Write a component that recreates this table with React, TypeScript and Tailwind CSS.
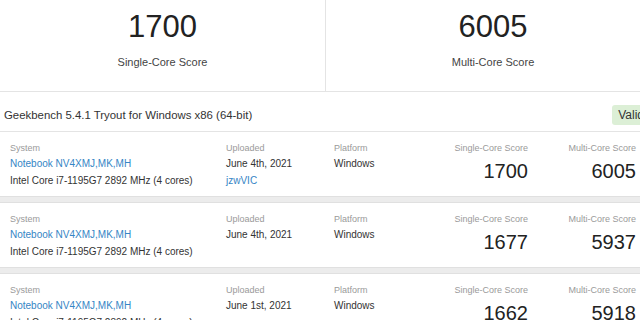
const results = [
  { uploaded: 'June 4th, 2021', user: 'jzwVIC', single: 1700, multi: 6005 },
  { uploaded: 'June 4th, 2021', user: '', single: 1677, multi: 5937 },
  { uploaded: 'June 1st, 2021', user: '', single: 1662, multi: 5918 },
];

// One benchmark result row
function ResultRow({ r }: { r: (typeof results)[number] }) {
  return (
    <div className="flex h-[64px] bg-white pl-[10px]">
      <div className="w-[216px]">
        <div className="mt-[10px] text-[9px] leading-[12px] text-[#9a9a9a]">System</div>
        <div className="text-[10px] leading-[17px] text-[#3585c5] mt-[1px]">Notebook NV4XMJ,MK,MH</div>
        <div className="text-[10px] leading-[17px] text-[#333]">Intel Core i7-1195G7 2892 MHz (4 cores)</div>
      </div>
      <div className="w-[108px]">
        <div className="mt-[10px] text-[9px] leading-[12px] text-[#9a9a9a]">Uploaded</div>
        <div className="text-[10px] leading-[17px] text-[#333] mt-[1px]">{r.uploaded}</div>
        {r.user && <div className="text-[10px] leading-[17px] text-[#3585c5]">{r.user}</div>}
      </div>
      <div className="w-[106px]">
        <div className="mt-[10px] text-[9px] leading-[12px] text-[#9a9a9a]">Platform</div>
        <div className="text-[10px] leading-[17px] text-[#333] mt-[1px]">Windows</div>
      </div>
      <div className="w-[88px] text-right">
        <div className="mt-[10px] text-[9px] leading-[12px] text-[#9a9a9a]">Single-Core Score</div>
        <div className="mt-[7px] text-[20px] leading-none text-[#222]">{r.single}</div>
      </div>
      <div className="w-[108px] text-right">
        <div className="mt-[10px] text-[9px] leading-[12px] text-[#9a9a9a]">Multi-Core Score</div>
        <div className="mt-[7px] text-[20px] leading-none text-[#222]">{r.multi}</div>
      </div>
    </div>
  );
}

export default function App() {
  return (
    <div className="w-[640px] h-[320px] overflow-hidden bg-[#eeeeee] font-['Liberation_Sans',Arial,sans-serif]">
      <div className="w-[660px]">
        {/* Score summary */}
        <div className="flex h-[92px] bg-white border-b border-[#e4e4e4]">
          <div className="w-[326px] border-r border-[#e4e4e4] flex flex-col items-center">
            <div className="mt-[11px] text-[31px] leading-none text-[#222]">1700</div>
            <div className="mt-[13px] text-[11px] leading-[14px] text-[#444]">Single-Core Score</div>
          </div>
          <div className="flex-1 flex flex-col items-center">
            <div className="mt-[11px] text-[31px] leading-none text-[#222]">6005</div>
            <div className="mt-[13px] text-[11px] leading-[14px] text-[#444]">Multi-Core Score</div>
          </div>
        </div>

        {/* Version header */}
        <div className="flex h-[40px] items-center justify-between bg-white border-b border-[#e4e4e4] pl-[4px] pr-[10px] pt-[6px]">
          <div className="text-[11.4px] leading-[16px] text-[#333]">Geekbench 5.4.1 Tryout for Windows x86 (64-bit)</div>
          <div className="h-[20px] px-[6px] rounded-[3px] bg-[#dcefd6] text-[12px] leading-[20px] text-[#333]">Valid</div>
        </div>

        {/* Result list */}
        {results.map((r, i) => (
          <div key={i}>
            {i > 0 && <div className="h-[7px] bg-[#ececec] border-y border-[#e0e0e0]" />}
            <ResultRow r={r} />
          </div>
        ))}
      </div>
    </div>
  );
}
